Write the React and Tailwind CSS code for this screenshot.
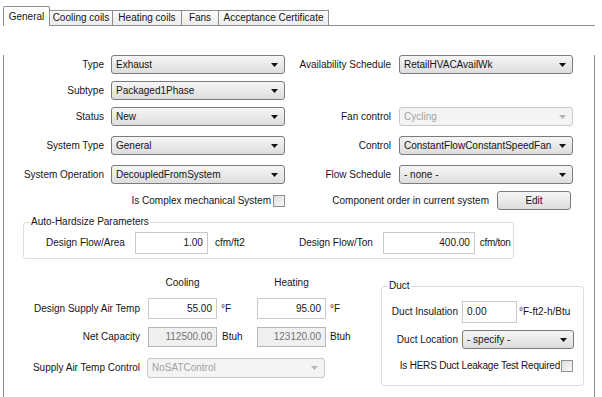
import React from "react";

function Arrow({ disabled }) {
  return (
    <svg width="7" height="4" viewBox="0 0 7 4" className="shrink-0">
      <path d="M0 0 H7 L3.5 4 Z" fill={disabled ? "#b4b4b4" : "#111"} />
    </svg>
  );
}

function Dropdown({ value, className, disabled }) {
  return (
    <div
      className={
        disabled
          ? `flex items-center justify-between rounded-[3px] border border-[#c8c8c8] bg-[#f4f4f4] pl-[4px] pr-[6px] text-[#a2a2a2] ${className}`
          : `flex items-center justify-between rounded-[3px] border border-[#7b7b7b] bg-linear-to-b from-[#f6f6f6] to-[#dddddd] pl-[4px] pr-[6px] ${className}`
      }
    >
      <span>{value}</span>
      <Arrow disabled={disabled} />
    </div>
  );
}

function Field({ value, className, disabled, left }) {
  return (
    <div
      className={
        (disabled
          ? "border border-[#b5b5b5] bg-[#f0f0f0] text-[#747474] "
          : "border border-[#c9c9c9] bg-white ") +
        (left ? "flex shrink-0 items-center pl-[4px] " : "flex shrink-0 items-center justify-end pr-[4px] ") +
        className
      }
    >
      {value}
    </div>
  );
}

function Checkbox() {
  return (
    <div className="h-[12px] w-[12px] shrink-0 border border-[#8e8f8f] bg-linear-to-br from-[#dcdcdc] to-[#fafafa]" />
  );
}

function FormRow({ left, leftValue, right, rightValue, rightDisabled, className }) {
  return (
    <div className={`grid grid-cols-[107px_174px_114px_174px] items-center ${className}`}>
      <span className="pr-[7px] text-right">{left}</span>
      <Dropdown value={leftValue} className="h-[19px]" />
      <span className="pr-[8px] text-right">{right}</span>
      {rightValue ? (
        <Dropdown value={rightValue} disabled={rightDisabled} className="h-[19px]" />
      ) : (
        <span />
      )}
    </div>
  );
}

const tabs = [
  { label: "Cooling coils", w: "w-[63px]" },
  { label: "Heating coils", w: "w-[69px]" },
  { label: "Fans", w: "w-[37px]" },
  { label: "Acceptance Certificate", w: "w-[110px]" },
];

export default function App() {
  return (
    <div className="h-[397px] w-[602px] overflow-hidden whitespace-nowrap bg-white font-['Liberation_Sans',Arial,sans-serif] text-[10px] leading-none text-[#151515]">
      <div className="flex items-end pl-[3px] pr-[7px] pt-[6px]">
        <div className="flex h-[20px] w-[47px] justify-center rounded-t-[2px] border border-b-0 border-[#8e8e8e] bg-white pt-[5px]">
          General
        </div>
        {tabs.map((t) => (
          <div
            key={t.label}
            className={`flex h-[16px] items-center justify-center border border-l-0 border-[#8e8e8e] bg-linear-to-b from-[#fbfbfb] to-[#ececec] ${t.w}`}
          >
            {t.label}
          </div>
        ))}
        <div className="flex-1 border-b border-[#8e8e8e]" />
      </div>

      <div className="ml-[3px] mr-[7px] h-[372px] border-x border-[#8e8e8e]">
        <FormRow
          className="mt-[29px]"
          left="Type"
          leftValue="Exhaust"
          right="Availability Schedule"
          rightValue="RetailHVACAvailWk"
        />
        <FormRow className="mt-[7px]" left="Subtype" leftValue="Packaged1Phase" />
        <FormRow
          className="mt-[7px]"
          left="Status"
          leftValue="New"
          right="Fan control"
          rightValue="Cycling"
          rightDisabled
        />
        <FormRow
          className="mt-[10px]"
          left="System Type"
          leftValue="General"
          right="Control"
          rightValue="ConstantFlowConstantSpeedFan"
        />
        <FormRow
          className="mt-[10px]"
          left="System Operation"
          leftValue="DecoupledFromSystem"
          right="Flow Schedule"
          rightValue="- none -"
        />

        <div className="mt-[7px] grid grid-cols-[281px_288px] items-center">
          <div className="flex items-center justify-end gap-[2px]">
            <span>Is Complex mechanical System</span>
            <Checkbox />
          </div>
          <div className="flex items-center justify-end gap-[8px] pr-[2px]">
            <span>Component order in current system</span>
            <div className="flex h-[19px] w-[74px] items-center justify-center rounded-[3px] border border-[#7b7b7b] bg-linear-to-b from-[#f6f6f6] to-[#dddddd]">
              Edit
            </div>
          </div>
        </div>

        <fieldset className="ml-[19px] mt-[7px] w-[491px] rounded-[3px] border border-[#d5dfe5] pb-[4px]">
          <legend className="ml-[6px] px-[1px]">Auto-Hardsize Parameters</legend>
          <div className="flex items-center pl-[22px] pt-[5px]">
            <span>Design Flow/Area</span>
            <Field value="1.00" className="ml-[10px] h-[22px] w-[73px]" />
            <span className="ml-[7px]">cfm/ft2</span>
            <span className="ml-[54px]">Design Flow/Ton</span>
            <Field value="400.00" className="ml-[10px] h-[22px] w-[92px]" />
            <span className="ml-[5px] tracking-[-0.3px]">cfm/ton</span>
          </div>
        </fieldset>

        <div className="flex items-start">
          <div className="mt-[18px] w-[377px] shrink-0">
            <div className="grid h-[12px] grid-cols-[144px_69px_40px_69px] items-center">
              <span />
              <span className="text-center">Cooling</span>
              <span />
              <span className="text-center">Heating</span>
            </div>
            <div className="mt-[9px] grid grid-cols-[144px_69px_40px_69px_auto] items-center">
              <span className="pr-[8px] text-right">Design Supply Air Temp</span>
              <Field value="55.00" className="h-[21px]" />
              <span className="pl-[4px]">°F</span>
              <Field value="95.00" className="h-[21px]" />
              <span className="pl-[4px]">°F</span>
            </div>
            <div className="mt-[8px] grid grid-cols-[144px_69px_40px_69px_auto] items-center">
              <span className="pr-[8px] text-right">Net Capacity</span>
              <Field value="112500.00" disabled className="h-[20px]" />
              <span className="pl-[5px]">Btuh</span>
              <Field value="123120.00" disabled className="h-[20px]" />
              <span className="pl-[4px]">Btuh</span>
            </div>
            <div className="mt-[11px] grid grid-cols-[143px_178px] items-center">
              <span className="pr-[7px] text-right">Supply Air Temp Control</span>
              <Dropdown value="NoSATControl" disabled className="h-[20px]" />
            </div>
          </div>

          <fieldset className="mt-[22px] w-[203px] shrink-0 rounded-[3px] border border-[#d5dfe5] pb-[13px]">
            <legend className="ml-[6px] px-[1px]">Duct</legend>
            <div className="mt-[10px] flex items-center">
              <span className="w-[80px] pr-[4px] text-right">Duct Insulation</span>
              <Field value="0.00" left className="h-[22px] w-[55px]" />
              <span className="ml-[2px]">°F-ft2-h/Btu</span>
            </div>
            <div className="mt-[7px] flex items-center">
              <span className="w-[80px] pr-[4px] text-right">Duct Location</span>
              <Dropdown value="- specify -" className="h-[19px] w-[112px]" />
            </div>
            <div className="mt-[11px] flex items-center justify-end gap-[1px] pr-[10px]">
              <span className="tracking-[-0.2px]">Is HERS Duct Leakage Test Required</span>
              <Checkbox />
            </div>
          </fieldset>
        </div>
      </div>
    </div>
  );
}
